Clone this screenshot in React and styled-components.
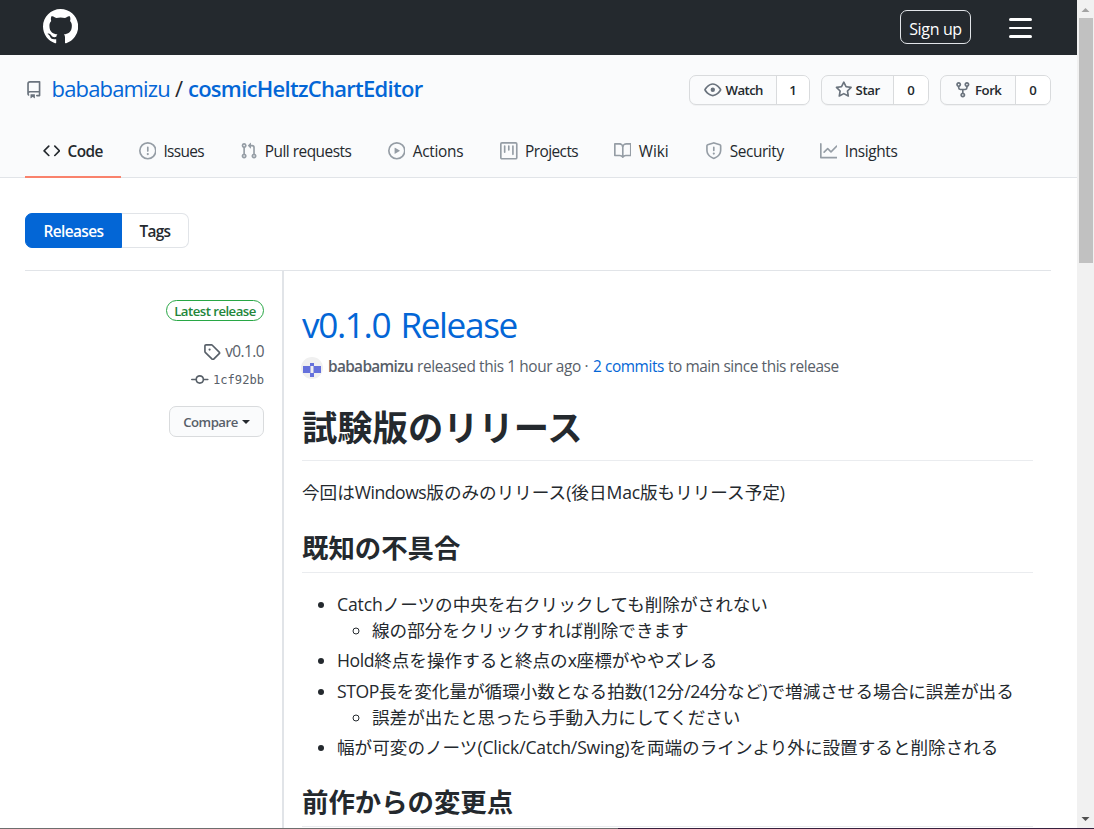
import React from 'react';
import styled, { createGlobalStyle, css } from 'styled-components';

const UI = '"Open Sans", "Noto Sans CJK JP", sans-serif';

const GlobalStyle = createGlobalStyle`
  * { box-sizing: border-box; }
  html, body { margin: 0; height: 829px; overflow: hidden; background: #fff; }
  body { font-family: ${UI}; color: #24292e; font-size: 15.4px; }
`;

const PATHS = {
  github: 'M8 0C3.58 0 0 3.58 0 8c0 3.54 2.29 6.53 5.47 7.59.4.07.55-.17.55-.38 0-.19-.01-.82-.01-1.49-2.01.37-2.53-.49-2.69-.94-.09-.23-.48-.94-.82-1.13-.28-.15-.68-.52-.01-.53.63-.01 1.08.58 1.23.82.72 1.21 1.87.87 2.33.66.07-.52.28-.87.51-1.07-1.78-.2-3.64-.89-3.64-3.95 0-.87.31-1.59.82-2.15-.08-.2-.36-1.02.08-2.12 0 0 .67-.21 2.2.82.64-.18 1.32-.27 2-.27.68 0 1.36.09 2 .27 1.53-1.04 2.2-.82 2.2-.82.44 1.1.16 1.92.08 2.12.51.56.82 1.27.82 2.15 0 3.07-1.87 3.75-3.65 3.95.29.25.54.73.54 1.48 0 1.07-.01 1.93-.01 2.2 0 .21.15.46.55.38A8.013 8.013 0 0016 8c0-4.42-3.58-8-8-8z',
  repo: 'M2 2.5A2.5 2.5 0 014.5 0h8.75a.75.75 0 01.75.75v12.5a.75.75 0 01-.75.75h-2.5a.75.75 0 110-1.5h1.75v-2h-8a1 1 0 00-.714 1.7.75.75 0 01-1.072 1.05A2.495 2.495 0 012 11.5v-9zm10.5-1V9h-8c-.356 0-.694.074-1 .208V2.5a1 1 0 011-1h8zM5 12.25v3.25a.25.25 0 00.4.2l1.45-1.087a.25.25 0 01.3 0L8.6 15.7a.25.25 0 00.4-.2v-3.25a.25.25 0 00-.25-.25h-3.5a.25.25 0 00-.25.25z',
  code: 'M4.72 3.22a.75.75 0 011.06 1.06L2.06 8l3.72 3.72a.75.75 0 11-1.06 1.06L.47 8.53a.75.75 0 010-1.06l4.25-4.25zm6.56 0a.75.75 0 10-1.06 1.06L13.94 8l-3.72 3.72a.75.75 0 101.06 1.06l4.25-4.25a.75.75 0 000-1.06l-4.25-4.25z',
  issue: 'M8 1.5a6.5 6.5 0 100 13 6.5 6.5 0 000-13zM0 8a8 8 0 1116 0A8 8 0 010 8zm9 3a1 1 0 11-2 0 1 1 0 012 0zm-.25-6.25a.75.75 0 00-1.5 0v3.5a.75.75 0 001.5 0v-3.5z',
  pull: 'M7.177 3.073L9.573.677A.25.25 0 0110 .854v4.792a.25.25 0 01-.427.177L7.177 3.427a.25.25 0 010-.354zM3.75 2.5a.75.75 0 100 1.5.75.75 0 000-1.5zm-2.25.75a2.25 2.25 0 113 2.122v5.256a2.251 2.251 0 11-1.5 0V5.372A2.25 2.25 0 011.5 3.25zM11 2.5h-1V4h1a1 1 0 011 1v5.628a2.251 2.251 0 101.5 0V5A2.5 2.5 0 0011 2.5zm1 10.25a.75.75 0 111.5 0 .75.75 0 01-1.5 0zM3.75 12a.75.75 0 100 1.5.75.75 0 000-1.5z',
  play: 'M1.5 8a6.5 6.5 0 1113 0 6.5 6.5 0 01-13 0zM8 0a8 8 0 100 16A8 8 0 008 0zM6.379 5.227A.25.25 0 006 5.442v5.117a.25.25 0 00.379.214l4.264-2.559a.25.25 0 000-.428L6.379 5.227z',
  project: 'M1.75 0A1.75 1.75 0 000 1.75v12.5C0 15.216.784 16 1.75 16h12.5A1.75 1.75 0 0016 14.25V1.75A1.75 1.75 0 0014.25 0H1.75zM1.5 1.75a.25.25 0 01.25-.25h12.5a.25.25 0 01.25.25v12.5a.25.25 0 01-.25.25H1.75a.25.25 0 01-.25-.25V1.75zM11.75 3a.75.75 0 00-.75.75v7.5a.75.75 0 001.5 0v-7.5a.75.75 0 00-.75-.75zm-8.25.75a.75.75 0 011.5 0v5.5a.75.75 0 01-1.5 0v-5.5zM8 3a.75.75 0 00-.75.75v3.5a.75.75 0 001.5 0v-3.5A.75.75 0 008 3z',
  book: 'M0 1.75A.75.75 0 01.75 1h4.253c1.227 0 2.317.59 3 1.501A3.744 3.744 0 0111.006 1h4.245a.75.75 0 01.75.75v10.5a.75.75 0 01-.75.75h-4.507a2.25 2.25 0 00-1.591.659l-.622.621a.75.75 0 01-1.06 0l-.622-.621A2.25 2.25 0 005.258 13H.75a.75.75 0 01-.75-.75V1.75zm8.755 3a2.25 2.25 0 012.25-2.25H14.5v9h-3.757c-.71 0-1.4.201-1.992.572l.004-7.322zm-1.504 7.324l.004-5.073-.002-2.253A2.25 2.25 0 005.003 2.5H1.5v9h3.757a3.75 3.75 0 011.994.574z',
  shield: 'M7.467.133a1.75 1.75 0 011.066 0l5.25 1.68A1.75 1.75 0 0115 3.48V7c0 1.566-.32 3.182-1.303 4.682-.983 1.498-2.585 2.813-5.032 3.855a1.7 1.7 0 01-1.33 0c-2.447-1.042-4.049-2.357-5.032-3.855C1.32 10.182 1 8.566 1 7V3.48a1.75 1.75 0 011.217-1.667l5.25-1.68zm.61 1.429a.25.25 0 00-.153 0l-5.25 1.68a.25.25 0 00-.174.238V7c0 1.358.275 2.666 1.057 3.86.784 1.194 2.121 2.34 4.366 3.297a.2.2 0 00.154 0c2.245-.956 3.582-2.104 4.366-3.298C13.225 9.666 13.5 8.36 13.5 7V3.48a.25.25 0 00-.174-.237l-5.25-1.68zM9 10.5a1 1 0 11-2 0 1 1 0 012 0zm-.25-5.75a.75.75 0 10-1.5 0v3a.75.75 0 001.5 0v-3z',
  graph: 'M1.5 1.75a.75.75 0 00-1.5 0v12.5c0 .414.336.75.75.75h14.5a.75.75 0 000-1.5H1.5V1.75zm14.28 2.53a.75.75 0 00-1.06-1.06L10 7.94 7.53 5.47a.75.75 0 00-1.06 0L3.22 8.72a.75.75 0 001.06 1.06L7 7.06l2.47 2.47a.75.75 0 001.06 0l5.25-5.25z',
  eye: 'M1.679 7.932c.412-.621 1.242-1.75 2.366-2.717C5.175 4.242 6.527 3.5 8 3.5c1.473 0 2.824.742 3.955 1.715 1.124.967 1.954 2.096 2.366 2.717a.119.119 0 010 .136c-.412.621-1.242 1.75-2.366 2.717C10.825 11.758 9.473 12.5 8 12.5c-1.473 0-2.824-.742-3.955-1.715C2.92 9.818 2.09 8.69 1.679 8.068a.119.119 0 010-.136zM8 2c-1.981 0-3.67.992-4.933 2.078C1.797 5.169.88 6.423.43 7.1a1.619 1.619 0 000 1.798c.45.678 1.367 1.932 2.637 3.024C4.329 13.008 6.019 14 8 14c1.981 0 3.67-.992 4.933-2.078 1.27-1.091 2.187-2.345 2.637-3.023a1.619 1.619 0 000-1.798c-.45-.678-1.367-1.932-2.637-3.023C11.671 2.992 9.981 2 8 2zm0 8a2 2 0 100-4 2 2 0 000 4z',
  star: 'M8 .25a.75.75 0 01.673.418l1.882 3.815 4.21.612a.75.75 0 01.416 1.279l-3.046 2.97.719 4.192a.75.75 0 01-1.088.791L8 12.347l-3.766 1.98a.75.75 0 01-1.088-.79l.72-4.194L.818 6.374a.75.75 0 01.416-1.28l4.21-.611L7.327.668A.75.75 0 018 .25zm0 2.445L6.615 5.5a.75.75 0 01-.564.41l-3.097.45 2.24 2.184a.75.75 0 01.216.664l-.528 3.084 2.769-1.456a.75.75 0 01.698 0l2.77 1.456-.53-3.084a.75.75 0 01.216-.664l2.24-2.183-3.096-.45a.75.75 0 01-.564-.41L8 2.694v.001z',
  fork: 'M5 3.25a.75.75 0 11-1.5 0 .75.75 0 011.5 0zm0 2.122a2.25 2.25 0 10-1.5 0v.878A2.25 2.25 0 005.75 8.5h1.5v2.128a2.251 2.251 0 101.5 0V8.5h1.5a2.25 2.25 0 002.25-2.25v-.878a2.25 2.25 0 10-1.5 0v.878a.75.75 0 01-.75.75h-4.5A.75.75 0 015 6.25v-.878zm3.75 7.378a.75.75 0 11-1.5 0 .75.75 0 011.5 0zm3-8.75a.75.75 0 100-1.5.75.75 0 000 1.5z',
  tag: 'M2.5 7.775V2.75a.25.25 0 01.25-.25h5.025a.25.25 0 01.177.073l6.25 6.25a.25.25 0 010 .354l-5.025 5.025a.25.25 0 01-.354 0l-6.25-6.25a.25.25 0 01-.073-.177zm-1.5 0V2.75C1 1.784 1.784 1 2.75 1h5.025c.464 0 .91.184 1.238.513l6.25 6.25a1.75 1.75 0 010 2.474l-5.026 5.026a1.75 1.75 0 01-2.474 0l-6.25-6.25A1.75 1.75 0 011 7.775zM6 5a1 1 0 100 2 1 1 0 000-2z',
  commit: 'M10.5 7.75a2.5 2.5 0 11-5 0 2.5 2.5 0 015 0zm1.43.75a4.002 4.002 0 01-7.86 0H.75a.75.75 0 110-1.5h3.32a4.001 4.001 0 017.86 0h3.32a.75.75 0 110 1.5h-3.32z',
};

const Svg = styled.svg`
  display: block;
  flex: none;
  width: ${(p) => p.$size}px;
  height: ${(p) => p.$size}px;
  fill: currentColor;
  color: ${(p) => p.$color};
`;

function Icon({ name, size = 17.6, color = '#959da5' }) {
  return (
    <Svg viewBox="0 0 16 16" $size={size} $color={color} aria-hidden="true">
      <path fillRule="evenodd" d={PATHS[name]} />
    </Svg>
  );
}

/* A run of text whose letters are set tighter than the font's own spacing. */
const Run = styled.span`
  letter-spacing: ${(p) => p.$track ?? -0.4}px;
  word-spacing: ${(p) => p.$word ?? 0}px;
  white-space: nowrap;
`;

const Window = styled.div`
  height: 829px;
  display: flex;
  flex-direction: column;
`;

const Viewport = styled.div`
  height: 828px;
  display: flex;
`;

const Page = styled.div`
  width: 1077px;
  height: 828px;
  overflow: hidden;
`;

const Scrollbar = styled.div`
  width: 17px;
  display: flex;
  flex-direction: column;
  justify-content: space-between;
  align-items: center;
  background: #f1f1f1;
`;

const Thumb = styled.div`
  width: 14px;
  height: 245px;
  margin-bottom: auto;
  background: #c1c1c1;
`;

const ScrollArrow = styled.svg`
  display: block;
  width: 17px;
  height: 18px;
  fill: ${(p) => p.$color};
`;

const BottomEdge = styled.div`
  height: 1px;
  background: linear-gradient(to right, #6e6e6e 618px, #37223f 618px);
`;

const TopBar = styled.header`
  height: 55px;
  padding: 0 45.5px 2px 43px;
  display: flex;
  align-items: center;
  background: #24292e;
`;

const SignUp = styled.a`
  width: 71px;
  height: 34px;
  margin: 0 37.5px 0 auto;
  display: flex;
  align-items: center;
  justify-content: center;
  padding-top: 4px;
  border: 1px solid #e1e4e8;
  border-radius: 7px;
  color: #fff;
  font-size: 16px;
`;

const Burger = styled.span`
  width: 23px;
  display: flex;
  flex-direction: column;
  gap: 6px;
  padding-top: 3px;
`;

const BurgerBar = styled.i`
  height: 2.4px;
  border-radius: 2px;
  background: #fff;
`;

const RepoHead = styled.section`
  height: 123px;
  background: #fafbfc;
  border-bottom: 1px solid #e1e4e8;
  display: flex;
  flex-direction: column;
  justify-content: space-between;
`;

const TitleRow = styled.div`
  padding: 17px 26px 0 25px;
  display: flex;
  align-items: center;
`;

const RepoTitle = styled.h1`
  margin: 0 auto 0 9px;
  height: 36px;
  font-size: 22px;
  font-weight: 400;
  line-height: 33px;
  display: flex;
  color: #0366d6;
`;

const Slash = styled.span`
  margin: 0 5px 0 5px;
  color: #24292e;
`;

const Strong = styled.strong`
  font-weight: 600;
`;

const SocialButton = styled.div`
  height: 30px;
  margin-left: 11px;
  width: ${(p) => p.$width}px;
  display: flex;
  align-items: stretch;
  border: 1px solid #d9dbdd;
  border-radius: 7px;
  background: #fafbfc;
  box-shadow: 0 1px 0 rgba(27, 31, 35, 0.04);
  overflow: hidden;
  font-size: 13.2px;
  font-weight: 600;
`;

const SocialLabel = styled.span`
  flex: 1;
  display: flex;
  align-items: center;
  padding-left: ${(p) => p.$pad}px;
  gap: ${(p) => p.$gap}px;
`;

const SocialCount = styled.span`
  width: ${(p) => p.$width}px;
  display: flex;
  align-items: center;
  justify-content: center;
  border-left: 1px solid #d9dbdd;
  background: #fff;
`;

const Tabs = styled.nav`
  display: flex;
  padding-left: 25px;
  margin-bottom: -1px;
`;

const Tab = styled.a`
  width: ${(p) => p.$width}px;
  height: 53px;
  padding: 0 0 1px 17.5px;
  display: flex;
  align-items: center;
  gap: 7.3px;
  font-size: 15.4px;
  font-weight: ${(p) => (p.$active ? 600 : 400)};
  ${(p) => p.$active && css`box-shadow: inset 0 -2px 0 #f9826c;`}
`;

const Content = styled.main`
  padding: 35px 26px 0 25px;
`;

const Subnav = styled.div`
  display: flex;
  height: 35px;
  margin-bottom: 22px;
`;

const SubnavItem = styled.a`
  width: ${(p) => p.$width}px;
  display: flex;
  align-items: center;
  justify-content: center;
  padding-top: 2px;
  font-weight: 600;
  border: 1px solid #e1e4e8;
  ${(p) =>
    p.$active
      ? css`
          color: #fff;
          background: #0366d6;
          border-color: #0366d6;
          border-radius: 7px 0 0 7px;
        `
      : css`
          border-left: 0;
          border-radius: 0 7px 7px 0;
        `}
`;

const Release = styled.article`
  display: grid;
  grid-template-columns: 257px 1fr;
  border-top: 1px solid #e1e4e8;
`;

const Meta = styled.aside`
  padding: 29px 18px 0 0;
  display: flex;
  flex-direction: column;
  align-items: flex-end;
  color: #586069;
`;

const Latest = styled.span`
  width: 98px;
  height: 21px;
  display: flex;
  align-items: center;
  justify-content: center;
  padding-top: 1px;
  border: 1px solid #28a745;
  border-radius: 20px;
  color: #22863a;
  font-size: 13.2px;
  font-weight: 600;
`;

const MetaLink = styled.a`
  height: ${(p) => p.$height}px;
  margin-top: ${(p) => p.$top}px;
  display: flex;
  align-items: center;
  gap: ${(p) => p.$gap}px;
  font-size: 15.4px;
`;

const Sha = styled.code`
  font: 12.1px "DejaVu Sans Mono", "Liberation Mono", monospace;
  letter-spacing: 0;
`;

const Compare = styled.button`
  width: 95px;
  height: 31px;
  margin-top: 16px;
  padding: 0;
  display: flex;
  align-items: center;
  justify-content: center;
  gap: 4px;
  border: 1px solid #d9dbdd;
  border-radius: 7px;
  background: #fafbfc;
  color: #586069;
  font-family: inherit;
  font-size: 13.2px;
  font-weight: 600;
`;

const Caret = styled.i`
  border: 4.5px solid transparent;
  border-top-color: #24292e;
  border-bottom: 0;
`;

const Main = styled.div`
  border-left: 2px solid #e1e4e8;
  padding: 30px 18px 0 18px;
  height: 558px;
`;

const ReleaseTitle = styled.h2`
  margin: 0;
  color: #0366d6;
  font-size: 35.2px;
  font-weight: 400;
  line-height: 46px;
`;

const Byline = styled.p`
  margin: 8px 0 0;
  height: 23px;
  display: flex;
  align-items: center;
  color: #586069;
`;

const Avatar = styled.svg`
  display: block;
  width: 22px;
  height: 22px;
  margin: 2px 5px 0 -1px;
`;

const Gap = styled.span`
  width: ${(p) => p.$w}px;
  flex: none;
`;

const Link = styled.a`
  color: #0366d6;
`;

const Markdown = styled.div`
  font-size: 17.6px;
  line-height: 26px;
`;

const Heading = styled.h3`
  margin: ${(p) => p.$top}px 0 0;
  height: ${(p) => p.$height}px;
  font-size: ${(p) => p.$size}px;
  line-height: ${(p) => p.$line}px;
  font-weight: 700;
  border-bottom: 1px solid #eaecef;
`;

const Paragraph = styled.p`
  margin: 18px 0 0;
  white-space: nowrap;
`;

const List = styled.ul`
  margin: ${(p) => (p.$nested ? 0 : 18)}px 0 0;
  padding: 0 0 0 35px;
  list-style: ${(p) => (p.$nested ? 'circle' : 'disc')};
`;

const Item = styled.li`
  white-space: nowrap;
  & + & { margin-top: 4.4px; }
`;

const TABS = [
  ['code', 'Code', 96, -0.5],
  ['issue', 'Issues', 101.4, -0.65],
  ['pull', 'Pull requests', 148, -0.5],
  ['play', 'Actions', 112.2, -0.3],
  ['project', 'Projects', 113.8, -0.55],
  ['book', 'Wiki', 91, -0.1],
  ['shield', 'Security', 115, -0.42],
  ['graph', 'Insights', 113, -0.37],
];

const SOCIAL = [
  { icon: 'eye', label: 'Watch', count: 1, width: 121, countWidth: 33, track: -0.6, pad: 14, gap: 4 },
  { icon: 'star', label: 'Star', count: 0, width: 108, countWidth: 35, track: -0.4, pad: 13, gap: 3 },
  { icon: 'fork', label: 'Fork', count: 0, width: 111, countWidth: 35, track: -0.5, pad: 13, gap: 3.5 },
];

export default function App() {
  return (
    <Window>
      <GlobalStyle />
      <Viewport>
        <Page>
          <TopBar>
            <Icon name="github" size={35.2} color="#fff" />
            <SignUp><Run $track={-0.35}>Sign up</Run></SignUp>
            <Burger><BurgerBar /><BurgerBar /><BurgerBar /></Burger>
          </TopBar>

          <RepoHead>
            <TitleRow>
              <Icon name="repo" color="#6a737d" />
              <RepoTitle>
                <Run $track={-0.85}>bababamizu</Run>
                <Slash>/</Slash>
                <Strong><Run $track={-0.72}>cosmicHeltzChartEditor</Run></Strong>
              </RepoTitle>
              {SOCIAL.map((s) => (
                <SocialButton key={s.label} $width={s.width}>
                  <SocialLabel $pad={s.pad} $gap={s.gap}>
                    <Icon name={s.icon} color="#6a737d" />
                    <Run $track={s.track}>{s.label}</Run>
                  </SocialLabel>
                  <SocialCount $width={s.countWidth}>{s.count}</SocialCount>
                </SocialButton>
              ))}
            </TitleRow>
            <Tabs>
              {TABS.map(([icon, label, width, track], i) => (
                <Tab key={label} $width={width} $active={i === 0}>
                  <Icon name={icon} color={i === 0 ? '#24292e' : '#959da5'} />
                  <Run $track={track}>{label}</Run>
                </Tab>
              ))}
            </Tabs>
          </RepoHead>

          <Content>
            <Subnav>
              <SubnavItem $width={97} $active><Run $track={-0.6}>Releases</Run></SubnavItem>
              <SubnavItem $width={67}><Run $track={-0.7}>Tags</Run></SubnavItem>
            </Subnav>
            <Release>
              <Meta>
                <Latest><Run $track={-0.53}>Latest release</Run></Latest>
                <MetaLink $height={23} $top={19} $gap={4.5}>
                  <Icon name="tag" color="#586069" />
                  <Run $track={-0.55}>v0.1.0</Run>
                </MetaLink>
                <MetaLink $height={20} $top={7} $gap={4}>
                  <Icon name="commit" color="#586069" />
                  <Sha>1cf92bb</Sha>
                </MetaLink>
                <Compare><Run $track={-0.5}>Compare</Run><Caret /></Compare>
              </Meta>
              <Main>
                <ReleaseTitle><Run $track={-1.38} $word={2.5}>v0.1.0 Release</Run></ReleaseTitle>
                <Byline>
                  <Avatar viewBox="0 0 22 22">
                    <circle cx="11" cy="11" r="11" fill="#f0f0f0" />
                    <path fill="#6571dc" fillRule="evenodd" d="M9 6h4v3h7v7h-7v4H9v-4H2V9h7zM9.500 9v7h3V9z" />
                  </Avatar>
                  <Strong><Run $track={-0.66}>bababamizu</Run></Strong>
                  <Gap $w={4} />
                  <Run $track={-0.38}>released this 1 hour ago ·</Run>
                  <Gap $w={4.8} />
                  <Link><Run $track={-0.41}>2 commits</Run></Link>
                  <Gap $w={4} />
                  <Run $track={-0.42}>to main since this release</Run>
                </Byline>
                <Markdown>
                  <Heading $top={26} $height={57} $size={35.3} $line={47}>試験版のリリース</Heading>
                  <Paragraph>
                    今回は<Run $track={-0.48}>Windows</Run>版のみのリリース(後日<Run $track={-0.2}>Mac</Run>版もリリース予定)
                  </Paragraph>
                  <Heading $top={27} $height={41} $size={26.4} $line={33}>既知の不具合</Heading>
                  <List>
                    <Item>
                      <Run $track={-0.15}>Catch</Run>ノーツの中央を右クリックしても削除がされない
                      <List $nested><Item>線の部分をクリックすれば削除できます</Item></List>
                    </Item>
                    <Item><Run $track={-0.4}>Hold</Run>終点を操作すると終点の<Run>x</Run>座標がややズレる</Item>
                    <Item>
                      <Run $track={-0.4}>STOP</Run>長を変化量が循環小数となる拍数<Run>(12</Run>分<Run>/24</Run>分など)で増減させる場合に誤差が出る
                      <List $nested><Item>誤差が出たと思ったら手動入力にしてください</Item></List>
                    </Item>
                    <Item>幅が可変のノーツ<Run $track={-0.18}>(Click/Catch/Swing)</Run>を両端のラインより外に設置すると削除される</Item>
                  </List>
                  <Heading $top={26} $height={41} $size={26.4} $line={33}>前作からの変更点</Heading>
                </Markdown>
              </Main>
            </Release>
          </Content>
        </Page>
        <Scrollbar>
          <ScrollArrow viewBox="0 0 17 18" $color="#a3a3a3"><path d="M4.5 12h8l-4-4z" /></ScrollArrow>
          <Thumb />
          <ScrollArrow viewBox="0 0 17 18" $color="#505050"><path d="M4.500 7h8l-4 4z" /></ScrollArrow>
        </Scrollbar>
      </Viewport>
      <BottomEdge />
    </Window>
  );
}
